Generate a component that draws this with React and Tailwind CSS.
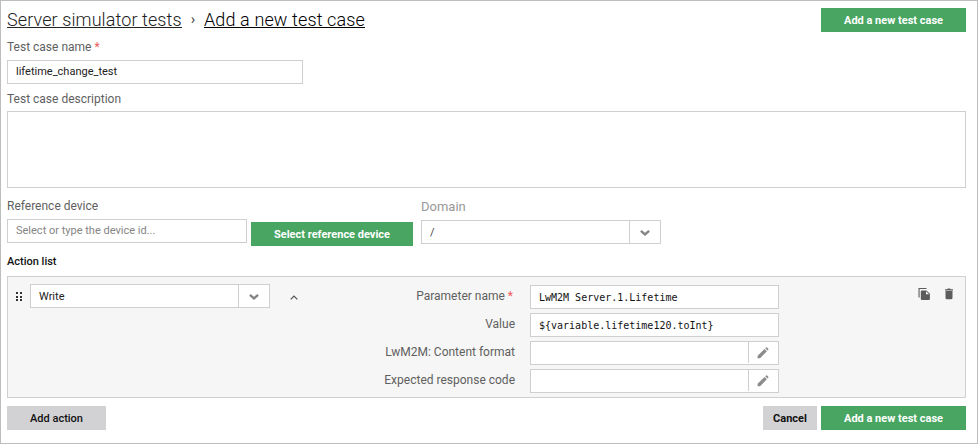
import React from "react";

function Label({ children, required, className = "" }) {
  return (
    <div className={`whitespace-nowrap text-[12px] leading-4 text-[#5f5f5f] ${className}`}>
      {children}
      {required && <span className="ml-[3px] text-[#f0595c]">*</span>}
    </div>
  );
}

function Button({ children, className = "" }) {
  return (
    <button className={`flex h-6 shrink-0 items-center justify-center whitespace-nowrap pt-[2px] text-[11px] ${className}`}>
      {children}
    </button>
  );
}

function Chevron() {
  return (
    <svg width="10" height="6" viewBox="0 0 10 6" fill="none" stroke="#858585" strokeWidth="2.4">
      <path d="M0.9 0.9 L5 4.4 L9.1 0.9" />
    </svg>
  );
}

function Select({ children, className = "" }) {
  return (
    <div className={`flex h-6 w-60 shrink-0 border border-[#cfcfcf] bg-white text-[11px] leading-[23px] ${className}`}>
      <div className="flex-1 pl-2">{children}</div>
      <div className="flex w-[31px] items-center justify-center border-l border-[#cfcfcf] pt-[2px]">
        <Chevron />
      </div>
    </div>
  );
}

function Pencil() {
  return (
    <svg width="12" height="12" viewBox="0 0 12 12" fill="#8c8c8c">
      <path d="M0.6 11.2 V8.7 L7.5 2 L9.9 4.3 L3.1 11.2 Z M8.2 1.3 L9.1 0.5 Q9.6 0.1 10.1 0.6 L11.3 1.8 Q11.7 2.3 11.3 2.8 L10.5 3.6 Z" />
    </svg>
  );
}

function ParamRow({ label, required, value, editable }) {
  return (
    <div className="flex h-6">
      <Label required={required} className={`w-[149px] pt-[3px] text-right ${required ? "pr-[2px]" : ""}`}>
        {label}
      </Label>
      <div className="ml-[15px] flex h-6 w-[249px] border border-[#cfcfcf] bg-white">
        <div className="flex-1 whitespace-pre pl-2 font-['DejaVu_Sans_Mono',monospace] text-[10px] leading-[23px] text-[#111]">
          {value}
        </div>
        {editable && (
          <div className="flex h-[21px] w-[30px] items-center justify-center border-l border-[#cfcfcf] pr-[2px] pt-px">
            <Pencil />
          </div>
        )}
      </div>
    </div>
  );
}

export default function App() {
  return (
    <div className="flex h-[444px] w-[978px] flex-col border border-[#bdbdbd] bg-white pl-[6px] pr-[11px] pt-[7px] font-[Roboto,sans-serif] text-[#222]">
      <header className="flex h-6 justify-between">
        <div className="flex whitespace-nowrap text-[18px] font-light leading-6 text-black">
          <span className="h-5 w-[175px] border-b border-[#222] tracking-[0.1px] text-[#222]">Server simulator tests</span>
          <span className="w-[22px] text-center text-[15px] font-normal leading-[23px] text-[#444]">›</span>
          <span className="h-5 w-[161px] border-b border-black tracking-[0.12px]">Add a new test case</span>
        </div>
        <Button className="w-[145px] bg-[#48a662] font-bold text-white">Add a new test case</Button>
      </header>

      <Label required className="mt-[7px]">Test case name</Label>
      <div className="mt-[5px] h-6 w-[296px] border border-[#cfcfcf] pl-2 text-[11px] leading-[21px]">lifetime_change_test</div>
      <Label className="mt-[7px]">Test case description</Label>
      <div className="mt-1 h-[77px] border border-[#cfcfcf]" />

      <section className="flex h-[58px] pt-[10px]">
        <div className="w-60">
          <Label>Reference device</Label>
          <div className="mt-[5px] h-6 border border-[#cfcfcf] pl-2 text-[11px] leading-[21px] text-[#858585]">
            Select or type the device id...
          </div>
        </div>
        <Button className="ml-1 mt-6 w-[162px] bg-[#48a662] font-bold text-white">Select reference device</Button>
        <div className="ml-2 pt-px">
          <Label className="text-[13px] text-[#999]">Domain</Label>
          <Select className="mt-[5px] text-[#444]">/</Select>
        </div>
      </section>

      <div className="mt-2 text-[11px] font-medium leading-4 text-[#111]">Action list</div>

      <section className="mt-[6px] flex h-[122px] border border-[#cfcfcf] bg-[#f6f6f6]">
        <div className="ml-2 mt-[15px] grid h-[9px] w-[6px] grid-cols-[2px_2px] content-between justify-between">
          {Array.from({ length: 6 }, (_, i) => (
            <i key={i} className="h-[2px] w-[2px] bg-[#333]" />
          ))}
        </div>
        <Select className="ml-2 mt-[7px]">Write</Select>
        <svg className="ml-5 mt-[18px]" width="8" height="5" viewBox="0 0 8 5" fill="none" stroke="#555" strokeWidth="1.3">
          <path d="M0.7 4.4 L4 1.1 L7.3 4.4" />
        </svg>
        <div className="ml-[68px] mt-2 flex flex-col gap-1">
          <ParamRow label="Parameter name" required value="LwM2M Server.1.Lifetime" />
          <ParamRow label="Value" value="${variable.lifetime120.toInt}" />
          <ParamRow label="LwM2M: Content format" editable />
          <ParamRow label="Expected response code" editable />
        </div>
        <div className="ml-auto mr-3 mt-[10px] flex gap-[14px]">
          <svg width="13" height="14" viewBox="0 0 13 14" fill="#5c5c5c">
            <path d="M0.5 1 H8.5 V2.1 H1.6 V10.5 H0.5 Z M3.8 3.4 H8.5 L11.9 6.8 V12 Q11.9 13 10.9 13 H3.8 Q2.8 13 2.8 12 V4.4 Q2.8 3.4 3.8 3.4 Z" />
            <path d="M8 4.2 V7.3 H11.1 Z" fill="#f6f6f6" />
          </svg>
          <svg className="mt-[1px]" width="8" height="12" viewBox="0 0 8 12" fill="#5c5c5c">
            <path d="M0 1.2 H2.2 L2.8 0.6 H5.2 L5.8 1.2 H8 V2.4 H0 Z M0.5 3.1 H7.5 V10.1 Q7.5 11.2 6.4 11.2 H1.6 Q0.5 11.2 0.5 10.1 Z" />
          </svg>
        </div>
      </section>

      <footer className="mt-2 flex">
        <Button className="w-[99px] bg-[#d2d2d4] font-medium text-[#111]">Add action</Button>
        <Button className="ml-auto w-[54px] bg-[#d2d2d4] font-bold text-[#111]">Cancel</Button>
        <Button className="ml-1 w-[145px] bg-[#48a662] font-bold text-white">Add a new test case</Button>
      </footer>
    </div>
  );
}
